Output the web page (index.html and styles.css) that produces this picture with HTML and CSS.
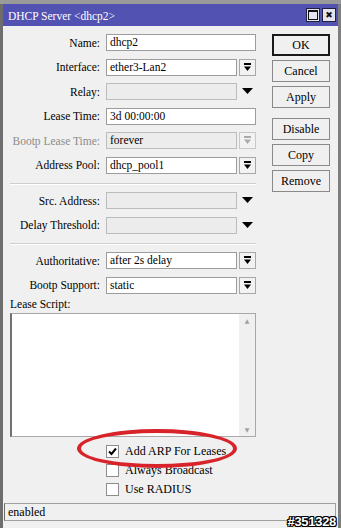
FILE: index.html
```html
<!DOCTYPE html>
<html lang="en">
<head>
    <meta charset="UTF-8">
    <title>DHCP Server &lt;dhcp2&gt;</title>
    <link rel="stylesheet" href="styles.css">
</head>
<body>
    <div class="window">
        <div class="titlebar">
            <span class="title">DHCP Server &lt;dhcp2&gt;</span>
            <div class="win-buttons">
                <span class="win-btn"><span class="max-icon"></span></span>
                <span class="win-btn close">&#x2716;</span>
            </div>
        </div>

        <div class="content">
            <div class="main">
                <div class="form">
                    <div class="row">
                        <label class="label">Name:</label>
                        <div class="field"><div class="input">dhcp2</div></div>
                    </div>
                    <div class="row">
                        <label class="label">Interface:</label>
                        <div class="field">
                            <div class="input">ether3-Lan2</div>
                            <span class="drop-btn"><svg width="9" height="9" viewBox="0 0 9 9"><rect x="1" y="0" width="7" height="2" fill="#000"/><path d="M1 3.5 H8 L4.5 8 Z" fill="#000"/></svg></span>
                        </div>
                    </div>
                    <div class="row">
                        <label class="label">Relay:</label>
                        <div class="field">
                            <div class="input disabled"></div>
                            <span class="drop-arrow"><svg width="11" height="7" viewBox="0 0 11 7"><path d="M0 0 H11 L5.5 6 Z" fill="#000"/></svg></span>
                        </div>
                    </div>
                    <div class="row">
                        <label class="label">Lease Time:</label>
                        <div class="field"><div class="input">3d 00:00:00</div></div>
                    </div>
                    <div class="row">
                        <label class="label muted">Bootp Lease Time:</label>
                        <div class="field">
                            <div class="input disabled">forever</div>
                            <span class="drop-btn off"><svg width="9" height="9" viewBox="0 0 9 9"><rect x="1" y="0" width="7" height="2" fill="#aaa"/><path d="M1 3.5 H8 L4.5 8 Z" fill="#aaa"/></svg></span>
                        </div>
                    </div>
                    <div class="row">
                        <label class="label">Address Pool:</label>
                        <div class="field">
                            <div class="input">dhcp_pool1</div>
                            <span class="drop-btn"><svg width="9" height="9" viewBox="0 0 9 9"><rect x="1" y="0" width="7" height="2" fill="#000"/><path d="M1 3.5 H8 L4.5 8 Z" fill="#000"/></svg></span>
                        </div>
                    </div>

                    <div class="separator"></div>

                    <div class="row">
                        <label class="label">Src. Address:</label>
                        <div class="field">
                            <div class="input disabled"></div>
                            <span class="drop-arrow"><svg width="11" height="7" viewBox="0 0 11 7"><path d="M0 0 H11 L5.5 6 Z" fill="#000"/></svg></span>
                        </div>
                    </div>
                    <div class="row">
                        <label class="label">Delay Threshold:</label>
                        <div class="field">
                            <div class="input disabled"></div>
                            <span class="drop-arrow"><svg width="11" height="7" viewBox="0 0 11 7"><path d="M0 0 H11 L5.5 6 Z" fill="#000"/></svg></span>
                        </div>
                    </div>

                    <div class="separator"></div>

                    <div class="row">
                        <label class="label">Authoritative:</label>
                        <div class="field">
                            <div class="input">after 2s delay</div>
                            <span class="drop-btn"><svg width="9" height="9" viewBox="0 0 9 9"><rect x="1" y="0" width="7" height="2" fill="#000"/><path d="M1 3.5 H8 L4.5 8 Z" fill="#000"/></svg></span>
                        </div>
                    </div>
                    <div class="row">
                        <label class="label">Bootp Support:</label>
                        <div class="field">
                            <div class="input">static</div>
                            <span class="drop-btn"><svg width="9" height="9" viewBox="0 0 9 9"><rect x="1" y="0" width="7" height="2" fill="#000"/><path d="M1 3.5 H8 L4.5 8 Z" fill="#000"/></svg></span>
                        </div>
                    </div>

                    <div class="script-label">Lease Script:</div>
                    <div class="script-box">
                        <div class="script-text"></div>
                        <div class="scrollbar">
                            <span class="scroll-arrow">&#x25B2;</span>
                            <span class="scroll-arrow">&#x25BC;</span>
                        </div>
                    </div>

                    <div class="checks">
                        <div class="check-row">
                            <span class="checkbox"><svg width="11" height="11" viewBox="0 0 11 11"><path d="M2 5.5 L4.5 8 L9 2.5" stroke="#000" stroke-width="2" fill="none"/></svg></span>
                            <span>Add ARP For Leases</span>
                        </div>
                        <div class="check-row">
                            <span class="checkbox"></span>
                            <span>Always Broadcast</span>
                        </div>
                        <div class="check-row">
                            <span class="checkbox"></span>
                            <span>Use RADIUS</span>
                        </div>
                    </div>
                </div>

                <div class="buttons">
                    <button class="btn default">OK</button>
                    <button class="btn">Cancel</button>
                    <button class="btn">Apply</button>
                    <button class="btn spaced">Disable</button>
                    <button class="btn">Copy</button>
                    <button class="btn">Remove</button>
                </div>
            </div>

            <div class="statusbar">enabled</div>
        </div>

        <div class="highlight"></div>
        <div class="watermark">#351328</div>
    </div>
</body>
</html>
```

FILE: styles.css
```css
html, body {
    margin: 0;
    padding: 0;
}
body {
    width: 341px;
    height: 528px;
    background: #9a9a9a;
    font-family: 'Liberation Serif', 'Times New Roman', serif;
    font-size: 11.5px;
    color: #000;
    overflow: hidden;
}
.window {
    position: relative;
    margin-top: 4px;
    height: 524px;
    box-sizing: border-box;
    border-left: 3px solid #6e6e6e;
    border-right: 3px solid #7e7e7e;
    display: flex;
    flex-direction: column;
}
.titlebar {
    height: 22px;
    background: #5252b2;
    display: flex;
    align-items: center;
    justify-content: space-between;
    padding: 0 2px 0 5px;
}
.title {
    color: #fff;
    font-size: 11.5px;
    padding-top: 1px;
}
.win-buttons {
    display: flex;
    gap: 2px;
}
.win-btn {
    width: 12px;
    height: 12px;
    border: 1px solid #202040;
    background: #e4e4ee;
    display: flex;
    align-items: center;
    justify-content: center;
    font-size: 9px;
    font-family: 'DejaVu Sans', sans-serif;
    color: #111;
}
.max-icon {
    width: 8px;
    height: 7px;
    border: 1px solid #111;
    border-top-width: 2px;
}
.content {
    flex: 1;
    background: #f0f0f0;
    display: flex;
    flex-direction: column;
}
.main {
    display: flex;
    gap: 16px;
    padding-top: 8px;
}
.form {
    width: 253px;
    display: flex;
    flex-direction: column;
}
.row {
    display: flex;
    align-items: center;
    gap: 6px;
    height: 17px;
    margin-bottom: 7.5px;
}
.label {
    width: 97px;
    text-align: right;
    white-space: nowrap;
}
.label.muted {
    color: #8c8c8c;
}
.field {
    width: 150px;
    display: flex;
    align-items: center;
    gap: 2px;
    height: 17px;
}
.input {
    flex: 1;
    height: 17px;
    box-sizing: border-box;
    background: #fff;
    border: 1px solid #9c9c9c;
    padding: 0 3px;
    line-height: 15px;
    white-space: nowrap;
    overflow: hidden;
}
.input.disabled {
    background: #ececec;
    border-color: #bcbcbc;
}
.drop-btn {
    width: 17px;
    height: 17px;
    box-sizing: border-box;
    border: 1px solid #a8a8a8;
    background: #f2f2f2;
    display: flex;
    align-items: center;
    justify-content: center;
}
.drop-btn.off {
    border-color: #c8c8c8;
}
.drop-arrow {
    width: 17px;
    height: 17px;
    display: flex;
    align-items: center;
    justify-content: center;
}
.separator {
    margin: 2px 0 7px 7px;
    height: 1px;
    background: #cfcfcf;
    border-bottom: 1px solid #fff;
}
.script-label {
    margin: -3px 0 3px 7px;
    line-height: 12px;
}
.script-box {
    margin-left: 7px;
    height: 124px;
    box-sizing: border-box;
    border: 1px solid #a8a8a8;
    border-left: 2px solid #707070;
    background: #fff;
    display: flex;
}
.script-text {
    flex: 1;
}
.scrollbar {
    width: 16px;
    background: #f0f0f0;
    display: flex;
    flex-direction: column;
    justify-content: space-between;
    align-items: center;
    padding: 3px 0;
}
.scroll-arrow {
    font-size: 6px;
    color: #a0a0a0;
    font-family: 'DejaVu Sans', sans-serif;
}
.checks {
    margin: 8px 0 0 103px;
    display: flex;
    flex-direction: column;
    gap: 6px;
}
.check-row {
    display: flex;
    align-items: center;
    gap: 6px;
    height: 13px;
    font-size: 12px;
}
.checkbox {
    width: 13px;
    height: 13px;
    box-sizing: border-box;
    border: 1px solid #8c8c8c;
    background: #fff;
    display: flex;
    align-items: center;
    justify-content: center;
}
.buttons {
    display: flex;
    flex-direction: column;
    gap: 4px;
    width: 58px;
}
.btn {
    height: 22px;
    box-sizing: border-box;
    background: #f0f0f0;
    border: 1px solid #8a8a8a;
    font-family: 'Liberation Serif', 'Times New Roman', serif;
    font-size: 12px;
    color: #000;
    padding: 0;
}
.btn.default {
    border: 2px solid #1a1a1a;
}
.btn.spaced {
    margin-top: 6px;
}
.statusbar {
    margin: auto 2px 7px 1px;
    height: 18px;
    box-sizing: border-box;
    border: 1px solid #a0a0a0;
    border-left-color: #6a6a6a;
    padding: 0 3px;
    line-height: 16px;
    font-size: 12px;
}
.highlight {
    position: absolute;
    left: 74px;
    top: 425px;
    width: 152px;
    height: 31px;
    border: 4px solid #d8232a;
    border-radius: 50%;
}
.watermark {
    position: absolute;
    right: 2px;
    bottom: 0;
    font-family: 'Liberation Sans', Arial, sans-serif;
    font-weight: bold;
    font-size: 13px;
    line-height: 13px;
    color: #fff;
    letter-spacing: -0.3px;
    text-shadow: 1px 0 0 #000, -1px 0 0 #000, 0 1px 0 #000, 0 -1px 0 #000, 1px 1px 0 #000, -1px -1px 0 #000, 1px -1px 0 #000, -1px 1px 0 #000;
}
```
